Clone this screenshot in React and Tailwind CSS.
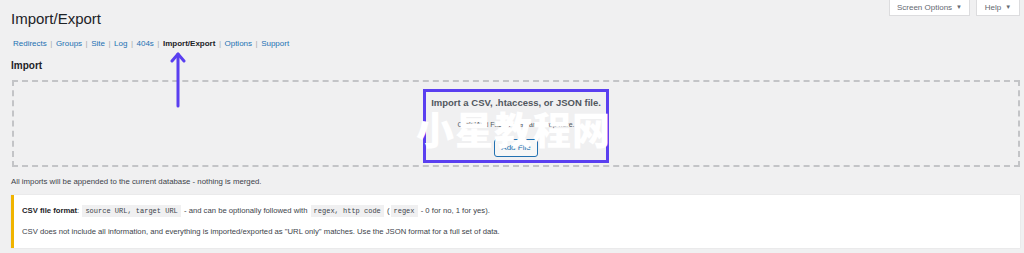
import React from "react";

const links = ["Redirects", "Groups", "Site", "Log", "404s", "Import/Export", "Options", "Support"];

const Code = ({ children }) => (
  <code className="bg-[#f0f0f1] px-[3px] py-[2px] mx-[1px] text-[7px] font-['Liberation_Mono',monospace] text-[#3c434a]">
    {children}
  </code>
);

export default function App() {
  return (
    <div className="relative w-[1024px] h-[253px] bg-[#f0f0f1] overflow-hidden font-['Liberation_Sans',sans-serif] text-[#1d2327]">
      {/* top right tabs */}
      <div className="absolute right-[4px] top-0 flex gap-[6px]">
        <button className="h-[16px] w-[81px] bg-white border border-[#dcdcde] border-t-0 text-[8px] text-[#646970] flex items-center justify-center gap-[4px]">
          Screen Options <span className="text-[6px]">▼</span>
        </button>
        <button className="h-[16px] w-[44px] bg-white border border-[#dcdcde] border-t-0 text-[8px] text-[#646970] flex items-center justify-center gap-[4px]">
          Help <span className="text-[6px]">▼</span>
        </button>
      </div>

      <div className="pl-[11px] pr-[4px] pt-[9px]">
        <h1 className="text-[15px] leading-[20px] font-normal text-[#1d2327]">Import/Export</h1>

        <div className="mt-[9px] ml-[2px] flex items-center text-[8px] leading-[12px]">
          {links.map((l, i) => (
            <span key={l} className="flex items-center">
              <span className={l === "Import/Export" ? "font-bold text-[#1d2327]" : "text-[#2271b1]"}>{l}</span>
              {i < links.length - 1 && <span className="text-[#a7aaad] mx-[3.5px]">|</span>}
            </span>
          ))}
        </div>

        <h2 className="mt-[10px] text-[10px] leading-[12px] font-semibold">Import</h2>

        <div className="mt-[8px] ml-[1px] h-[87px] border-2 border-dashed border-[#c3c4c7] flex justify-center">
          <div className="mt-[7px] w-[186px] h-[74px] border-[3px] border-[#5a3ff0] flex flex-col items-center">
            <p className="mt-[4px] text-[9.5px] font-semibold text-[#50575e] whitespace-nowrap">
              Import a CSV, .htaccess, or JSON file.
            </p>
            <p className="mt-[10px] text-[7px] text-[#50575e]">Click 'Add File' or drag and drop here.</p>
            <button className="mt-[8px] h-[18px] px-[6px] border border-[#2271b1] rounded-[3px] text-[8px] text-[#2271b1] bg-[#f6f7f7]">
              Add File
            </button>
          </div>
        </div>

        <p className="mt-[9px] text-[7.8px] text-[#3c434a]">All imports will be appended to the current database - nothing is merged.</p>

        <div className="mt-[7px] h-[53px] bg-white border-l-[3px] border-[#f0b400] shadow-[0_0_1px_rgba(0,0,0,0.15)] pl-[8px] flex flex-col justify-center gap-[9px] text-[7.7px] text-[#3c434a]">
          <p>
            <span className="font-bold text-[#1d2327]">CSV file format</span>: <Code>source URL, target URL</Code> - and can be optionally followed with <Code>regex, http code</Code> (<Code>regex</Code> - 0 for no, 1 for yes).
          </p>
          <p>CSV does not include all information, and everything is imported/exported as "URL only" matches. Use the JSON format for a full set of data.</p>
        </div>
      </div>

      {/* annotation arrow */}
      <svg className="absolute left-[170px] top-[52px]" width="16" height="56" viewBox="0 0 16 56">
        <path d="M8 2 L8 54" stroke="#5a3ff0" strokeWidth="3" strokeLinecap="round" />
        <path d="M2 9 L8 2 L14 9" stroke="#5a3ff0" strokeWidth="3" fill="none" strokeLinecap="round" strokeLinejoin="round" />
      </svg>

      {/* watermark */}
      <div className="absolute left-[416px] top-[108px] text-[38px] leading-[40px] font-black text-white tracking-[1px] font-['Noto_Sans_CJK_SC',sans-serif] pointer-events-none">
        小星教程网
      </div>
    </div>
  );
}
